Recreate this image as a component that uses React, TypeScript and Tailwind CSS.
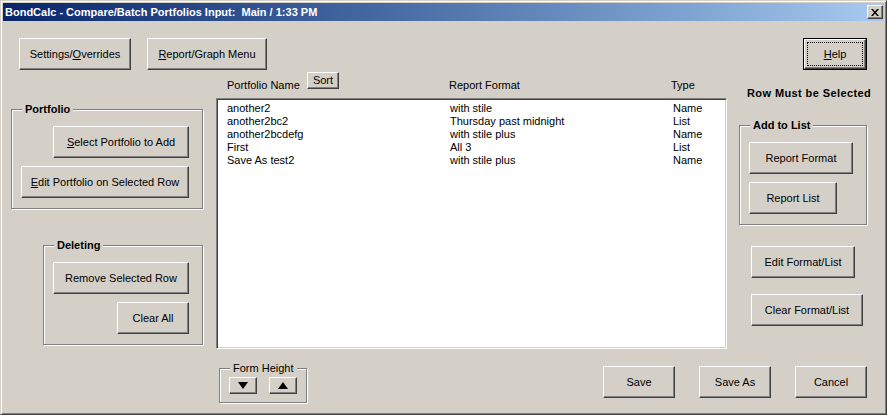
import React from "react";

const bevel =
  "bg-[#d4d0c8] border border-t-white border-l-white border-r-[#404040] border-b-[#404040] shadow-[inset_-1px_-1px_#808080]";

const Btn = ({ className, children }: { className: string; children: React.ReactNode }) => (
  <div className={`${bevel} flex shrink-0 items-center justify-center leading-[13px] ${className}`}>{children}</div>
);

const Frame = ({
  label,
  bold = true,
  className,
  children,
}: {
  label: string;
  bold?: boolean;
  className: string;
  children: React.ReactNode;
}) => (
  <div className={`shrink-0 border border-[#808080] shadow-[inset_1px_1px_white,1px_1px_white] ${className}`}>
    <div className={`-mt-[7px] ml-[10px] w-fit bg-[#d4d0c8] px-[3px] leading-[13px] ${bold ? "font-bold" : ""}`}>
      {label}
    </div>
    {children}
  </div>
);

const rows = [
  ["another2", "with stile", "Name"],
  ["another2bc2", "Thursday past midnight", "List"],
  ["another2bcdefg", "with stile plus", "Name"],
  ["First", "All 3", "List"],
  ["Save As test2", "with stile plus", "Name"],
];

const Arrow = ({ up }: { up?: boolean }) => (
  <svg width="10" height="7" viewBox="0 0 10 7">
    <polygon points={up ? "5,0 10,7 0,7" : "0,0 10,0 5,7"} fill="black" />
  </svg>
);

export default function App() {
  return (
    <div className="flex h-[415px] w-[887px] flex-col border border-t-[#d4d0c8] border-l-[#d4d0c8] border-r-[#404040] border-b-[#404040] bg-[#d4d0c8] p-[2px] font-['Liberation_Sans',Arial,sans-serif] text-[11px] text-black shadow-[inset_1px_1px_white,inset_-1px_-1px_#808080]">
      {/* title bar */}
      <div className="flex h-[18px] shrink-0 items-center justify-between bg-gradient-to-r from-[#0a246a] to-[#a6caf0] pl-[2px] pr-[1px]">
        <span className="whitespace-pre font-bold text-white">BondCalc - Compare/Batch Portfolios Input:  Main / 1:33 PM</span>
        <div className={`${bevel} flex h-[14px] w-[16px] items-center justify-center`}>
          <svg width="8" height="7" viewBox="0 0 8 7">
            <path d="M0 0h2l2 2.5L6 0h2L5 3.5 8 7H6L4 4.5 2 7H0l3-3.5z" fill="black" />
          </svg>
        </div>
      </div>

      {/* top buttons */}
      <div className="mt-[17px] flex h-[32px] shrink-0 items-start pl-[16px] pr-[17px]">
        <Btn className="h-[32px] w-[112px]">
          Settings/<u>O</u>verrides
        </Btn>
        <Btn className="ml-[16px] h-[32px] w-[120px]">
          <u>R</u>eport/Graph Menu
        </Btn>
        <div className="ml-auto h-[32px] w-[64px] border border-black">
          <div className={`${bevel} flex h-full w-full p-[2px]`}>
            <div className="flex flex-1 items-center justify-center border border-dotted border-black leading-[13px]">
              <span>
                <u>H</u>elp
              </span>
            </div>
          </div>
        </div>
      </div>

      {/* main area */}
      <div className="flex flex-1">
        {/* left column */}
        <div className="ml-[8px] flex w-[192px] shrink-0 flex-col">
          <Frame label="Portfolio" className="mt-[39px] h-[100px] w-[192px]">
            <Btn className="ml-[41px] mt-[10px] h-[32px] w-[136px]">
              <span>
                <u>S</u>elect Portfolio to Add
              </span>
            </Btn>
            <Btn className="ml-[9px] mt-[8px] h-[32px] w-[168px]">
              <span>
                <u>E</u>dit Portfolio on Selected Row
              </span>
            </Btn>
          </Frame>
          <Frame label="Deleting" className="ml-[32px] mt-[36px] h-[100px] w-[160px]">
            <Btn className="ml-[9px] mt-[10px] h-[32px] w-[136px]">Remove Selected Row</Btn>
            <Btn className="ml-[73px] mt-[8px] h-[32px] w-[72px]">Clear All</Btn>
          </Frame>
        </div>

        {/* right part */}
        <div className="ml-[13px] flex min-w-0 flex-1 flex-col pr-[17px]">
          <div className="flex">
            {/* list column */}
            <div className="flex w-[511px] shrink-0 flex-col">
              <div className="flex h-[28px] items-start pl-[11px] leading-[13px]">
                <div className="flex w-[222px]">
                  <span className="mt-[9px] w-[80px]">Portfolio Name</span>
                  <Btn className="mt-[2px] h-[17px] w-[32px]">Sort</Btn>
                </div>
                <span className="mt-[9px] w-[222px]">Report Format</span>
                <span className="mt-[9px]">Type</span>
              </div>
              <div className="h-[251px] border border-t-[#808080] border-l-[#808080] border-r-white border-b-white bg-white pl-[10px] pt-[3px] leading-[13px] shadow-[inset_1px_1px_#404040,inset_-1px_-1px_#d4d0c8]">
                {rows.map((r) => (
                  <div key={r[0]} className="flex">
                    <span className="w-[223px]">{r[0]}</span>
                    <span className="w-[223px]">{r[1]}</span>
                    <span>{r[2]}</span>
                  </div>
                ))}
              </div>
            </div>

            {/* right column */}
            <div className="ml-[12px] flex w-[128px] shrink-0 flex-col">
              <div className="ml-[8px] mt-[17px] w-[112px] whitespace-nowrap font-bold leading-[13px] tracking-[0.4px]">
                Row Must be Selected
              </div>
              <Frame label="Add to List" className="mt-[25px] h-[100px] w-[128px]">
                <Btn className="ml-[9px] mt-[10px] h-[32px] w-[104px]">Report Format</Btn>
                <Btn className="ml-[9px] mt-[8px] h-[32px] w-[88px]">Report List</Btn>
              </Frame>
              <Btn className="ml-[12px] mt-[21px] h-[32px] w-[104px]">Edit Format/List</Btn>
              <Btn className="ml-[12px] mt-[16px] h-[32px] w-[112px]">Clear Format/List</Btn>
            </div>
          </div>

          {/* bottom row */}
          <div className="flex items-start">
            <Frame label="Form Height" bold={false} className="ml-[3px] mt-[19px] h-[35px] w-[88px]">
              <div className="ml-[9px] mt-[2px] flex gap-[12px]">
                <Btn className="h-[17px] w-[28px]">
                  <Arrow />
                </Btn>
                <Btn className="h-[17px] w-[28px]">
                  <Arrow up />
                </Btn>
              </div>
            </Frame>
            <div className="ml-auto mt-[17px] flex gap-[24px]">
              <Btn className="h-[32px] w-[72px]">Save</Btn>
              <Btn className="h-[32px] w-[72px]">Save As</Btn>
              <Btn className="h-[32px] w-[72px]">Cancel</Btn>
            </div>
          </div>
        </div>
      </div>
    </div>
  );
}
